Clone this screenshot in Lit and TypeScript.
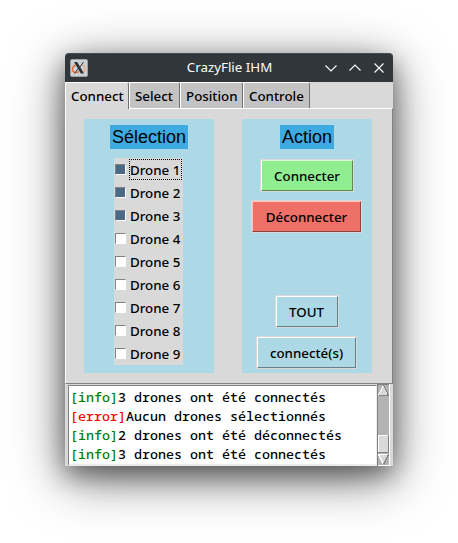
import { LitElement, html, css } from "lit";
import { customElement, state } from "lit/decorators.js";
import { classMap } from "lit/directives/class-map.js";

@customElement("window-titlebar")
class WindowTitlebar extends LitElement {
  static styles = css`
    :host {
      display: grid;
      grid-template-columns: 92px 1fr 92px;
      align-items: center;
      height: 29px;
      box-sizing: border-box;
      padding-bottom: 1px;
      background: #31363b;
      border-top: 1px solid #464b50;
      border-radius: 4px 4px 0 0;
      color: #fcfcfc;
      font: 13.33px/19px "Noto Sans", sans-serif;
    }
    .logo { margin-left: 5px; display: block; }
    .title { padding: 0 0 1px 1px; text-align: center; white-space: nowrap; }
    .controls { display: flex; gap: 12px; justify-content: flex-end; padding-right: 8px; }
    svg { display: block; }
  `;
  render() {
    return html`
      <svg class="logo" width="18" height="18" viewBox="0 0 18 18">
        <rect x=".5" y=".5" width="17" height="17" rx="1.5" fill="#cdd1d3" stroke="#9da2a6" />
        <path d="M5.500 6C2 7.500 1.500 11 3.800 12.800c1.500 1.100 3.700.8 5.200-.2" fill="none" stroke="#e8703c" stroke-width="1.500" />
        <path d="M12.500 6c3 1.300 3.500 4.300 1.900 6-1 1-2.600 1.300-4 .8" fill="none" stroke="#efa882" stroke-width="1.300" />
        <path d="M4 3h3.200l6.800 11.500h-3.200z" fill="#2c3236" />
        <path d="M13.500 3 10 8M8 10 4.500 14.500" stroke="#2c3236" stroke-width="1" />
      </svg>
      <div class="title">CrazyFlie IHM</div>
      <div class="controls">
        <svg width="12" height="12" viewBox="0 0 12 12" fill="none" stroke="#fcfcfc" stroke-width="1.1"><path d="M.5 3.500 6 9l5.500-5.500" /></svg>
        <svg width="12" height="12" viewBox="0 0 12 12" fill="none" stroke="#fcfcfc" stroke-width="1.1"><path d="M.5 8.500 6 3l5.500 5.500" /></svg>
        <svg width="12" height="12" viewBox="0 0 12 12" fill="none" stroke="#fcfcfc" stroke-width="1.1"><path d="m1.500 1.500 9 9m0-9-9 9" /></svg>
      </div>
    `;
  }
}

@customElement("log-console")
class LogConsole extends LitElement {
  static styles = css`
    :host {
      display: flex;
      box-sizing: border-box;
      height: 82px;
      padding: 0 3px;
      background: #d9d9d9;
    }
    .text {
      box-sizing: border-box;
      width: 309px;
      height: 81px;
      margin-top: 1px;
      padding: 2px 0 0 1px;
      overflow: hidden;
      background: #fff;
      border: solid;
      border-width: 1px 1px 2px 1px;
      border-color: #828282 #ececec #ececec #828282;
      font: 500 13.33px/19px "Noto Sans Mono", "DejaVu Sans Mono", monospace;
      color: #000;
    }
    .line { white-space: pre; }
    .info { color: #008000; }
    .error { color: #f00; }
    svg { display: block; }
  `;
  private lines = [
    ["info", "3 drones ont été connectés"],
    ["error", "Aucun drones sélectionnés"],
    ["info", "2 drones ont été déconnectés"],
    ["info", "3 drones ont été connectés"],
  ];
  render() {
    return html`
      <div class="text">
        ${this.lines.map(([k, t]) => html`<div class="line"><span class=${k}>[${k}]</span>${t}</div>`)}
      </div>
      <svg width="13" height="82" viewBox="0 0 13 82" shape-rendering="crispEdges">
        <rect width="13" height="82" fill="#b3b3b3" />
        <path d="M0 0h13v1H1v81H0z" fill="#828282" />
        <path d="M12 0h1v82H1v-1h11z" fill="#fff" />
        <path d="M6.500 1 1.500 11h10z" fill="#d9d9d9" />
        <path d="M6.500 1 1.500 11" stroke="#fff" /><path d="m6.500 1 5 10.500h-10" stroke="#828282" fill="none" />
        <rect x="1" y="51" width="11" height="18" fill="#d9d9d9" />
        <path d="M1 51h11v1H2v17H1z" fill="#fff" /><path d="M12 51v18H1v-1h10V51z" fill="#828282" />
        <path d="M1.500 70.500h10l-5 10z" fill="#d9d9d9" />
        <path d="M6.500 80.500 1.500 70.500h10" stroke="#fff" fill="none" /><path d="m11.500 70.500-5 10" stroke="#828282" />
      </svg>
    `;
  }
}

@customElement("app-root")
class AppRoot extends LitElement {
  static styles = css`
    :host {
      display: flex;
      box-sizing: border-box;
      width: 458px;
      height: 543px;
      padding: 53px 65px;
      overflow: hidden;
      background: #fff;
      font: 500 13.33px/19px "Noto Sans", sans-serif;
      color: #000;
    }
    .window {
      width: 328px;
      height: 413px;
      border-radius: 4px 4px 0 0;
      background: #d9d9d9;
      box-shadow: 0 12px 52px rgba(0, 0, 0, 0.55), 0 9px 24px rgba(0, 0, 0, 0.4);
    }
    .tabs { display: flex; height: 26px; }
    .tab {
      box-sizing: border-box;
      height: 26px;
      padding: 4px 0 0 5px;
      background: #c3c3c3;
      border: solid;
      border-width: 1px;
      border-bottom: 0;
      border-color: #fff #6f6f6f #fff #fff;
      border-radius: 2px 3px 0 0;
      white-space: nowrap;
    }
    .tab.active { background: #d9d9d9; height: 27px; position: relative; }
    .t0 { width: 64px; }
    .t1 { width: 51px; }
    .t2 { width: 63px; }
    .t3 { width: 67px; }
    .page {
      box-sizing: border-box;
      display: flex;
      gap: 28px;
      height: 276px;
      padding: 10px 0 0 18px;
      border: 1px solid;
      border-color: #fff #828282 #828282 #fff;
    }
    .panel {
      box-sizing: border-box;
      display: flex;
      flex-direction: column;
      align-items: center;
      width: 130px;
      height: 254px;
      padding: 6px 0 4px;
      background: #add8e6;
    }
    .heading {
      height: 24px;
      padding: 0 2px;
      background: #3daae1;
      font: 18px/24px "Liberation Sans", sans-serif;
      white-space: nowrap;
    }
    .checks { width: 69px; margin: 9px 1px 0 0; background: #d9d9d9; }
    .check { display: flex; height: 23px; }
    .box {
      box-sizing: border-box;
      width: 11px;
      height: 11px;
      margin: 6px 3px 0 1px;
      background: #fff;
      border: 1px solid;
      border-color: #828282 #fff #fff #828282;
    }
    .box.on { background: #4a6984; }
    .name {
      box-sizing: border-box;
      width: 53px;
      height: 21px;
      margin-top: 1px;
      border: 1px dotted transparent;
      line-height: 20px;
      white-space: nowrap;
    }
    .name.focus { border-color: #000; }
    .button {
      box-sizing: border-box;
      height: 33px;
      border: 1px solid #d9d9d9;
      text-align: center;
      white-space: nowrap;
    }
    .face { box-sizing: border-box; height: 31px; border: 1px solid; padding-top: 6px; }
    .connect { width: 94px; margin-top: 10px; }
    .connect .face { background: #90ee90; border-color: #d8fad8 #568e56 #568e56 #fff; }
    .disconnect { width: 111px; margin: 8px 1px 0 0; }
    .disconnect .face { background: #ee7066; border-color: #ffc2bd #8e433d #8e433d #ffc2bd; }
    .all { width: 64px; margin-top: auto; }
    .all .face { padding-right: 1px; }
    .linked { width: 101px; margin: 8px 1px 0 0; }
    .all .face, .linked .face { background: #add8e6; border-color: #fff #67818a #67818a #fff; }
  `;
  @state() private tabs = ["Connect", "Select", "Position", "Controle"];
  @state() private selected = new Set([1, 2, 3]);

  private button(kind: string, label: string) {
    return html`<div class="button ${kind}"><div class="face">${label}</div></div>`;
  }

  render() {
    return html`
      <div class="window">
        <window-titlebar></window-titlebar>
        <div class="tabs">
          ${this.tabs.map((t, i) => html`<div class="tab t${i} ${i ? "" : "active"}">${t}</div>`)}
        </div>
        <div class="page">
          <div class="panel">
            <div class="heading">Sélection</div>
            <div class="checks">
              ${[1, 2, 3, 4, 5, 6, 7, 8, 9].map(
                (n) => html`<div class="check">
                  <div class=${classMap({ box: true, on: this.selected.has(n) })}></div>
                  <div class=${classMap({ name: true, focus: n === 1 })}>Drone ${n}</div>
                </div>`
              )}
            </div>
          </div>
          <div class="panel">
            <div class="heading">Action</div>
            ${this.button("connect", "Connecter")} ${this.button("disconnect", "Déconnecter")}
            ${this.button("all", "TOUT")} ${this.button("linked", "connecté(s)")}
          </div>
        </div>
        <log-console></log-console>
      </div>
    `;
  }
}
